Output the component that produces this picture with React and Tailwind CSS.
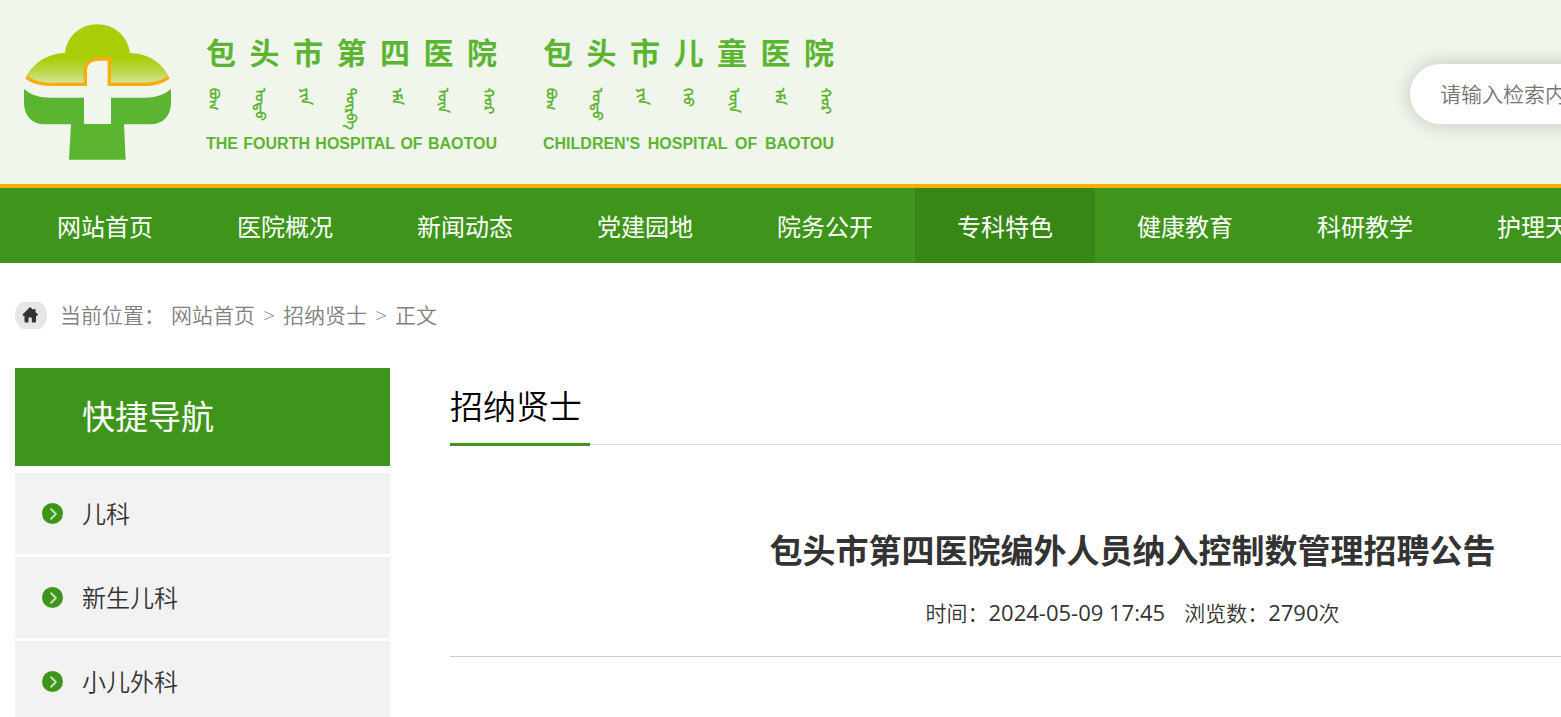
import { ChevronRight } from 'lucide-react';

const navItems = ['网站首页', '医院概况', '新闻动态', '党建园地', '院务公开', '专科特色', '健康教育', '科研教学', '护理天地'];
const activeNav = '专科特色';

const departments = ['儿科', '新生儿科', '小儿外科'];

const hospitalNames = [
  {
    chinese: '包头市第四医院',
    mongolian: ['ᠪᠤᠭ', 'ᠣᠲᠤ', 'ᠶᠢᠨ', 'ᠳᠥᠷᠪᠡ', 'ᠡᠮᠨ', 'ᠦᠨ', 'ᠬᠣᠷ'],
    english: 'THE FOURTH HOSPITAL OF BAOTOU',
  },
  {
    chinese: '包头市儿童医院',
    mongolian: ['ᠪᠤᠭ', 'ᠣᠲᠤ', 'ᠶᠢᠨ', 'ᠬᠡᠦ', 'ᠦᠨ', 'ᠡᠮᠨ', 'ᠬᠣᠷ'],
    english: "CHILDREN'S HOSPITAL OF BAOTOU",
  },
];

function LogoMark() {
  return (
    <svg className="h-[138px] w-[150px] shrink-0" viewBox="69 69 450 414" aria-hidden="true">
      <defs>
        <linearGradient id="crown" gradientUnits="userSpaceOnUse" x1="0" y1="72" x2="0" y2="258">
          <stop offset="0" stopColor="#a9ce07" />
          <stop offset="0.55" stopColor="#a9ce07" />
          <stop offset="0.78" stopColor="#bdd74f" />
          <stop offset="1" stopColor="#dbe8ae" />
        </linearGradient>
      </defs>
      <path
        fill="url(#crown)"
        d="M77 233C98 190 142 160 195 159C201 108 241 73 292 73S383 108 390 159C442 160 488 188 508 233C488 245 464 253 434 253H328V177H300C274 177 257 188 257 212V253H150C122 253 98 246 77 233Z"
      />
      <path fill="#f0f6eb" d="M256 262V210C257 187 275 177 300 177H329V262Z" />
      <path
        fill="none"
        stroke="#f9ad08"
        strokeWidth="10"
        d="M79 232C98 246 121 253 150 253H256V210C257 187 275 177 300 177H336M328 177V253H434C464 253 486 247 506 232"
      />
      <path
        fill="#5bb531"
        d="M72 267C93 285 118 293 150 293H252V372H333V293H434C466 293 492 285 513 267V312C511 348 489 373 452 373H372L377 479H207L213 373H133C96 373 74 348 72 312Z"
      />
    </svg>
  );
}

function HospitalName({ name }) {
  return (
    <div className="w-[291px] text-[#5bb531]">
      <div className="flex h-[38px] items-center justify-between text-[30px] leading-[38px] font-bold">
        {name.chinese.split('').map((char, i) => (
          <span key={i}>{char}</span>
        ))}
      </div>
      <div className="mt-4 flex h-[38px] items-start justify-between text-sm leading-4 font-bold">
        {name.mongolian.map((word, i) => (
          <span key={i} lang="mn-Mong" className="[writing-mode:vertical-lr]">{word}</span>
        ))}
      </div>
      <div className="mt-2 flex justify-between font-['Liberation_Sans',sans-serif] text-base leading-5 font-bold">
        {name.english.split(' ').map((word, i) => (
          <span key={i}>{word}</span>
        ))}
      </div>
    </div>
  );
}

function Header() {
  return (
    <header className="border-b-4 border-[#f9b005] bg-[#f0f6eb]">
      <div className="flex h-[184px] items-center justify-between px-[15px]">
        <a href="#" className="flex items-center pl-2">
          <LogoMark />
          <div className="mt-1 ml-[33px] flex gap-[46px]">
            {hospitalNames.map((name) => (
              <HospitalName key={name.english} name={name} />
            ))}
          </div>
        </a>
        <input
          type="search"
          aria-label="检索"
          placeholder="请输入检索内容"
          className="mt-1 h-[60px] w-[405px] rounded-full bg-white px-[30px] text-[21px] font-[350] shadow-[0_0_20px_rgba(0,0,0,0.2)] outline-none placeholder:text-[#757575]"
        />
      </div>
    </header>
  );
}

function Navbar() {
  return (
    <nav className="flex h-[75px] bg-[#3f951b] px-[15px]">
      {navItems.map((item) => (
        <a
          key={item}
          href="#"
          className={`h-[75px] w-[180px] text-center text-2xl leading-[78px] text-white ${item === activeNav ? 'bg-[#388616]' : ''}`}
        >
          {item}
        </a>
      ))}
    </nav>
  );
}

function Breadcrumb() {
  return (
    <div className="flex h-[105px] items-center text-[21px] font-[350] text-[#808080]">
      <svg className="mr-[13px] h-[27px] w-8" viewBox="0 0 32 27" aria-hidden="true">
        <path fill="#e6e6e6" d="M7 0H25Q32 5 32 13.500T25 27H7Q0 22 0 13.500T7 0Z" />
        <path fill="#333" d="M15 5L7.500 12.500L8.500 14H9.500V19.500Q9.500 20.500 10.500 20.500H13.500V15.500H16.800V20.500H20Q21 20.500 21 19.500V14H22L23 12.500L20.500 10V7H18.500V8Z" />
      </svg>
      <span>当前位置：</span>
      <div className="ml-1.5 flex gap-2">
        <a href="#">网站首页</a>
        <span>&gt;</span>
        <a href="#">招纳贤士</a>
        <span>&gt;</span>
        <span>正文</span>
      </div>
    </div>
  );
}

function Sidebar() {
  return (
    <aside className="w-[375px] shrink-0">
      <h2 className="mb-[7px] h-[98px] bg-[#3f951b] pl-[67px] text-[33px] leading-[98px] text-white">快捷导航</h2>
      <ul className="space-y-[3px]">
        {departments.map((item) => (
          <li key={item}>
            <a href="#" className="flex h-[81px] items-center bg-[#f2f2f2] pl-[27px] text-2xl font-[350] text-[#333]">
              <span className="mr-[19px] flex size-[21px] items-center justify-center rounded-full bg-[#3f951b]">
                <ChevronRight className="ml-0.5 size-5 text-[#c5e3b8]" strokeWidth={2.500} />
              </span>
              {item}
            </a>
          </li>
        ))}
      </ul>
    </aside>
  );
}

function Article() {
  return (
    <main className="flex-1">
      <div className="flex h-[77px] border-b border-[#ddd]">
        <h2 className="-mb-[2px] w-[140px] border-b-3 border-[#3f951b] text-[33px] leading-[78px] font-[350] text-black">招纳贤士</h2>
      </div>
      <div className="border-b border-[#ccc] pt-20 pb-[26px] text-center text-[#333]">
        <h1 className="text-[33px] leading-[52px] font-bold">包头市第四医院编外人员纳入控制数管理招聘公告</h1>
        <div className="mt-[18px] flex justify-center gap-[19px] text-[21px] leading-[34px] font-[350]">
          <span>时间：<span className="text-[22px] font-normal">2024-05-09 17:45</span></span>
          <span>浏览数：<span className="text-[22px] font-normal">2790</span>次</span>
        </div>
      </div>
    </main>
  );
}

export default function App() {
  return (
    <div className="h-screen overflow-hidden bg-white font-['Open_Sans','Noto_Sans_CJK_SC',sans-serif]">
      <div className="min-w-[1830px]">
        <Header />
        <Navbar />
        <div className="px-[15px]">
          <Breadcrumb />
          <div className="flex gap-[60px]">
            <Sidebar />
            <Article />
          </div>
        </div>
      </div>
    </div>
  );
}
